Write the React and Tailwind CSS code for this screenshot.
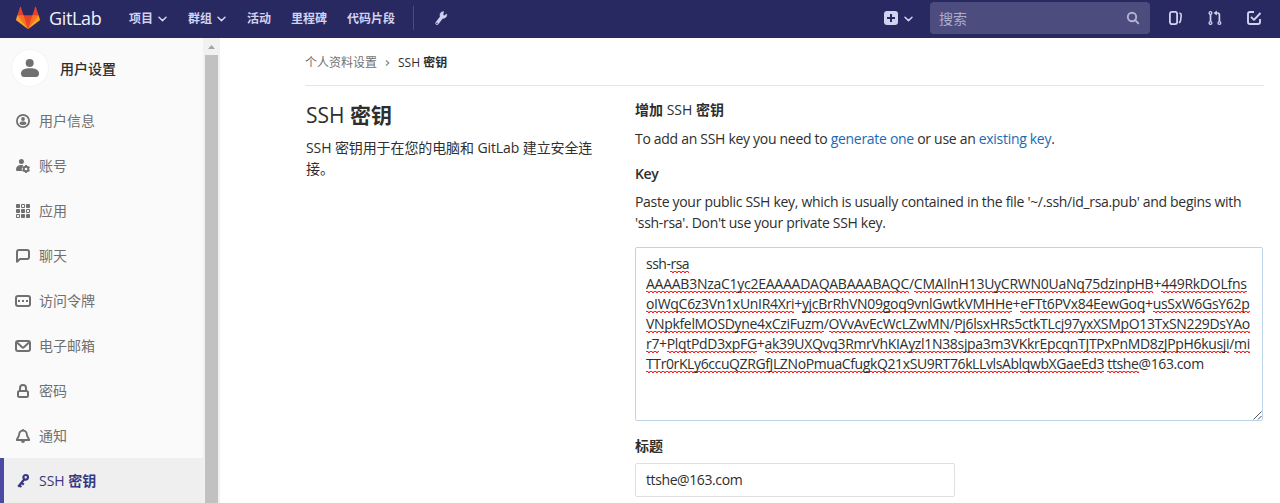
import React from "react";

const cjk = "font-['Open_Sans','Noto_Sans_CJK_SC',sans-serif]";

function Logo() {
  return (
    <svg className="block h-6 w-6 shrink-0" viewBox="0 0 36 36">
      <path fill="#e24329" d="M2 14l9.38 9v-9l-4-12.28c-.205-.632-1.176-.632-1.38 0z" />
      <path fill="#e24329" d="M34 14l-9.38 9v-9l4-12.28c.205-.632 1.176-.632 1.38 0z" />
      <path fill="#e24329" d="M18 34.38L3 14h30z" />
      <path fill="#fc6d26" d="M18 34.38L11.38 14H2l4 11z" />
      <path fill="#fc6d26" d="M18 34.38L24.62 14H34l-4 11z" />
      <path fill="#fca326" d="M2 14L.1 20.16c-.18.565 0 1.2.5 1.56l17.42 12.66z" />
      <path fill="#fca326" d="M34 14l1.9 6.16c.18.565 0 1.2-.5 1.56L18 34.38z" />
    </svg>
  );
}

function Chevron() {
  return (
    <svg className="mt-px block h-[6px] w-[9px]" viewBox="0 0 9 6" fill="none" stroke="currentColor" strokeWidth="1.5" strokeLinecap="round" strokeLinejoin="round">
      <path d="M1 1.200l3.500 3.400L8 1.200" />
    </svg>
  );
}

function Icon({ children, className = "" }) {
  return (
    <svg className={"block h-4 w-4 shrink-0 " + className} viewBox="0 0 16 16" fill="none" stroke="currentColor" strokeWidth="2" strokeLinejoin="round">
      {children}
    </svg>
  );
}

const icons = {
  profile: (
    <>
      <circle cx="8" cy="8" r="6.1" strokeWidth="1.8" />
      <circle cx="8" cy="6" r="1.9" fill="currentColor" stroke="none" />
      <path d="M4.6 10.2c0-1.1 1.2-1.7 3.4-1.7s3.4.6 3.4 1.7c0 .9-1.5 1.8-3.4 1.8s-3.4-.9-3.4-1.8z" fill="currentColor" stroke="none" />
    </>
  ),
  account: (
    <>
      <circle cx="6.4" cy="3.4" r="2.5" fill="currentColor" stroke="none" />
      <path d="M1 11.500C1 8.600 3 7 6 7c1 0 1.700.1 2.400.4A5 5 0 0 0 7.200 13H2.500C1.500 13 1 12.500 1 11.500z" fill="currentColor" stroke="none" />
      <circle cx="11" cy="11" r="2.300" strokeWidth="1.900" />
      <path d="M11 7v1.500M11 13.500V15M7.500 9l1.300.8M13.200 12.200l1.300.8M7.500 13l1.300-.8M13.200 9.800l1.300-.8" strokeWidth="1.900" />
    </>
  ),
  apps: (
    <>
      {[1, 6, 11].map((y, r) =>
        [1, 6, 11].map((x, c) => {
          const hollow = (r === 0 && c === 1) || (r === 1 && c === 2) || (r === 2 && c === 0);
          return hollow ? (
            <rect key={x + "-" + y} x={x + 0.5} y={y + 0.5} width="3" height="3" rx=".5" strokeWidth="1.100" />
          ) : (
            <rect key={x + "-" + y} x={x} y={y} width="4" height="4" rx=".8" fill="currentColor" stroke="none" />
          );
        })
      )}
    </>
  ),
  chat: <path d="M2 13.800V4a2 2 0 0 1 2-2h8a2 2 0 0 1 2 2v5a2 2 0 0 1-2 2H5z" strokeWidth="2" />,
  token: (
    <>
      <rect x="1" y="3" width="14" height="10" rx="2" />
      <path d="M3 8h2M7 8h2M11 8h2" strokeLinejoin="miter" />
    </>
  ),
  mail: (
    <>
      <rect x="1" y="3" width="14" height="10" rx="2" />
      <path d="M2 4.500l4.900 4.600a1.600 1.600 0 0 0 2.200 0L14 4.500" />
    </>
  ),
  lock: (
    <>
      <rect x="3" y="8" width="10" height="6" rx="1.500" />
      <path d="M5 8V5a3 3 0 0 1 6 0v3" />
    </>
  ),
  bell: (
    <>
      <path d="M8 2.600c-2.500 0-3.700 1.700-3.900 4-.2 2.400-1.800 3.400-2.300 5.400h12.400c-.5-2-2.100-3-2.300-5.400-.2-2.300-1.400-4-3.900-4z" strokeWidth="1.900" />
      <path d="M6 13h4c-.2 1.300-.9 2-2 2s-1.800-.7-2-2z" fill="currentColor" stroke="none" />
      <circle cx="8" cy="1.900" r="1" fill="currentColor" stroke="none" />
    </>
  ),
  key: (
    <>
      <circle cx="10.700" cy="4.300" r="2.300" strokeWidth="2.200" />
      <path d="M9.300 6.200L3.200 13.800M6.200 9.500l2.600 2.200M4.100 12l2.300 2" strokeWidth="2.200" />
    </>
  ),
};

const items = [
  ["profile", "用户信息"],
  ["account", "账号"],
  ["apps", "应用"],
  ["chat", "聊天"],
  ["token", "访问令牌"],
  ["mail", "电子邮箱"],
  ["lock", "密码"],
  ["bell", "通知"],
];

function Header() {
  return (
    <header className="flex h-[38px] shrink-0 bg-[#292961] pb-[2px] text-[#d1d1f0]">
      <div className="flex w-[129px] items-center pl-4">
        <Logo />
        <span className="ml-[9px] text-[18px] leading-6 tracking-[-0.35px] text-[#f2f2fa]">GitLab</span>
      </div>
      <nav className="flex items-center pt-px text-xs font-bold">
        <span className="flex w-[59px] items-center gap-[5px]">项目<Chevron /></span>
        <span className="flex w-[59px] items-center gap-[5px]">群组<Chevron /></span>
        <span className="w-11">活动</span>
        <span className="w-14">里程碑</span>
        <span className="w-[66px]">代码片段</span>
      </nav>
      <div className="mt-[6px] h-6 w-px bg-[#4b4b80]" />
      <svg className="mt-[10px] ml-[19px] block h-4 w-4" viewBox="0 0 16 16" fill="none" stroke="currentColor">
        <path d="M4 13.200l4.600-6" strokeWidth="3.400" strokeLinecap="round" />
        <path d="M8.300 2.200A3.600 3.600 0 0 0 8 7.500a3.600 3.600 0 0 0 5.800-2.800l-.2-.6-2.200 1.600-1.600-1.100.9-3z" fill="currentColor" strokeWidth=".6" />
        <circle cx="3.900" cy="13.300" r=".8" fill="#292961" stroke="none" />
      </svg>
      <div className="ml-auto flex items-center">
        <svg className="block h-[14px] w-[14px]" viewBox="0 0 14 14">
          <rect width="14" height="14" rx="3" fill="currentColor" />
          <path d="M7 3v8M3 7h8" stroke="#292961" strokeWidth="2" />
        </svg>
        <span className="mr-[17px] ml-[6px]"><Chevron /></span>
        <div className="flex h-8 w-[220px] items-center justify-between rounded bg-[#4c4c7e] pr-[10px] pl-[9px] text-sm text-[#acacd0]">
          <span className="pt-px">搜索</span>
          <svg className="block h-[14px] w-[14px]" viewBox="0 0 14 14" fill="none" stroke="#b2b2d2" strokeWidth="1.900">
            <circle cx="6" cy="6" r="4.200" />
            <path d="M9 9l3.300 3.300" strokeLinecap="round" />
          </svg>
        </div>
        <Icon className="ml-[17px]">
          <rect x="2.900" y="1.900" width="7.200" height="12.200" rx="2" strokeWidth="1.800" />
          <path d="M12.400 3c1.300.3 1.900.9 1.800 2.100l-.6 5.300c-.1 1.200-.5 1.900-1.700 2.300" strokeWidth="1.600" />
        </Icon>
        <Icon className="ml-6">
          <g strokeWidth="1.300">
            <circle cx="3.500" cy="3" r="1.400" />
            <circle cx="3.500" cy="13" r="1.400" />
            <circle cx="12.400" cy="13" r="1.400" />
            <path d="M3.500 4.400v7.200M12.400 11.600V5a2 2 0 0 0-2-2H8" strokeWidth="1.700" />
          </g>
          <path d="M9.800.6v4.800L6.600 3z" fill="currentColor" stroke="none" />
        </Icon>
        <Icon className="mr-[18px] ml-[23px]">
          <path d="M8 2H4a2 2 0 0 0-2 2v8a2 2 0 0 0 2 2h8a2 2 0 0 0 2-2V9" strokeWidth="1.900" />
          <path d="M5 6.800l3 3L14.500 3" strokeWidth="1.900" />
        </Icon>
      </div>
    </header>
  );
}

function Sidebar() {
  return (
    <aside className="flex w-[220px] shrink-0 bg-[#fafafa]">
      <div className="w-[203px]">
        <div className="flex h-[60px] items-center pl-[11px]">
          <div className="flex h-[38px] w-[38px] items-center justify-center rounded-full border border-[#f4f4f4] bg-white">
            <svg className="block h-5 w-5" viewBox="0 0 20 20" fill="#707070">
              <circle cx="9.700" cy="4.900" r="4" />
              <path d="M1 15.500C1 12 4.300 10.300 10 10.300S19 12 19 15.500c0 2-1 3.500-3 3.500H4c-2 0-3-1.500-3-3.500z" />
            </svg>
          </div>
          <span className="ml-[11px] pt-[2px] text-sm font-medium text-[#2e2e2e]">用户设置</span>
        </div>
        <ul className="text-sm text-[#707070]">
          {items.map(([icon, label]) => (
            <li key={icon} className="flex h-[45px] items-center pl-[15px]">
              <Icon>{icons[icon]}</Icon>
              <span className="ml-2">{label}</span>
            </li>
          ))}
          <li className="flex h-[45px] items-center border-l-4 border-[#4b4ba3] bg-[#efefef] pl-[11px] text-[#393982]">
            <Icon>{icons.key}</Icon>
            <span className="ml-2">SSH <b>密钥</b></span>
          </li>
        </ul>
      </div>
      <div className="flex w-[17px] flex-col items-center bg-[#f1f1f1]">
        <div className="flex h-[17px] items-center">
          <svg className="block h-1 w-[7px]" viewBox="0 0 7 4"><path d="M3.500 0L7 4H0z" fill="#a3a3a3" /></svg>
        </div>
        <div className="w-[13px] flex-1 bg-[#c1c1c1]" />
      </div>
    </aside>
  );
}

function Misspelt({ children }) {
  return (
    <span className="bg-[linear-gradient(90deg,#ff2020_50%,#ff9c9c_50%),linear-gradient(90deg,transparent_50%,#ff2020_50%)] [background-position:0_calc(100%_-_1px),0_100%] bg-repeat-x [background-size:4px_1px]">
      {children}
    </span>
  );
}

const keyLines = [
  ["tracking-[-0.5px]", ["ssh-", "*rsa"]],
  ["tracking-[-0.26px]", ["*AAAAB3NzaC1yc2EAAAADAQABAAABAQC", "/", "*CMAIlnH13UyCRWN0UaNq75dzinpHB", "+", "*449RkDOLfns"]],
  ["tracking-[-0.3px]", ["*oIWqC6z3Vn1xUnIR4Xri", "+", "*yjcBrRhVN09goq9vnlGwtkVMHHe", "+", "*eFTt6PVx84EewGoq", "+", "*usSxW6GsY62p"]],
  ["tracking-[-0.33px]", ["*VNpkfelMOSDyne4xCziFuzm", "/", "*OVvAvEcWcLZwMN", "/", "*Pj6lsxHRs5ctkTLcj97yxXSMpO13TxSN229DsYAo"]],
  ["tracking-[-0.325px]", ["*r7", "+", "*PlqtPdD3xpFG", "+", "*ak39UXQvq3RmrVhKIAyzl1N38sjpa3m3VKkrEpcqnTJTPxPnMD8zJPpH6kusji", "/", "*mi"]],
  ["tracking-[-0.39px]", ["*TTr0rKLy6ccuQZRGfJLZNoPmuaCfugkQ21xSU9RT76kLLvlsAblqwbXGaeEd3", " ", "*ttshe", "@163.com"]],
];

function KeyBox() {
  return (
    <div className="relative mt-[14px] mr-px h-[174px] rounded-[2px] border border-[#bfd3ea] bg-white px-[10px] py-[6px] text-sm leading-5 whitespace-pre text-[#2e2e2e]">
      {keyLines.map(([tracking, parts], i) => (
        <div key={i} className={tracking}>
          {parts.map((p, j) => (p[0] === "*" ? <Misspelt key={j}>{p.slice(1)}</Misspelt> : p))}
        </div>
      ))}
      <svg className="absolute right-0 bottom-0 h-[9px] w-[9px]" viewBox="0 0 9 9" stroke="#555" strokeWidth="1">
        <path d="M.5 8.500l8-8M5 8.500L8.500 5" />
      </svg>
    </div>
  );
}

function Content() {
  return (
    <main className="min-w-0 flex-1 pr-4 pl-[86px] text-[#2e2e2e]">
      <div className="-ml-px flex h-12 items-center border-b border-[#e5e5e5] pt-[2px] text-xs">
        <span className="text-[#707070]">个人资料设置</span>
        <svg className="mr-[7px] ml-2 block h-[6px] w-[5px]" viewBox="0 0 5 6" fill="none" stroke="#888" strokeWidth="1.200">
          <path d="M1 .5L3.800 3 1 5.500" />
        </svg>
        <span className="pl-px">SSH <b>密钥</b></span>
      </div>
      <div className="flex text-sm leading-[21px]">
        <section className="w-[329px] shrink-0 pt-[15px]">
          <h4 className="text-[21px] leading-7">SSH <b>密钥</b></h4>
          <p className="mt-2 w-[290px] tracking-[-0.1px]">SSH 密钥用于在您的电脑和 GitLab 建立安全连接。</p>
        </section>
        <section className="min-w-0 flex-1 pt-[13px]">
          <h5><b>增加</b> SSH <b>密钥</b></h5>
          <p className="mt-2 tracking-[-0.3px] whitespace-nowrap">
            To add an SSH key you need to <a className="text-[#1b69b6]">generate one</a> or use an <a className="text-[#1b69b6]">existing key</a>.
          </p>
          <p className="mt-[14px] font-semibold tracking-[-0.4px]">Key</p>
          <p className="mt-[7px] tracking-[-0.305px] whitespace-nowrap">
            <span className="block">Paste your public SSH key, which is usually contained in the file '~/.ssh/id_rsa.pub' and begins with</span>
            <span className="block">'ssh-rsa'. Don't use your private SSH key.</span>
          </p>
          <KeyBox />
          <p className="mt-[14px] font-bold">标题</p>
          <div className="mt-[7px] flex h-[34px] w-80 items-center rounded-[2px] border border-[#dfdfdf] px-[10px] pb-[2px] tracking-[-0.4px]">ttshe@163.com</div>
        </section>
      </div>
    </main>
  );
}

export default function App() {
  return (
    <div className={"flex h-[503px] w-[1280px] flex-col overflow-hidden bg-white " + cjk}>
      <Header />
      <div className="flex min-h-0 flex-1">
        <Sidebar />
        <Content />
      </div>
    </div>
  );
}
